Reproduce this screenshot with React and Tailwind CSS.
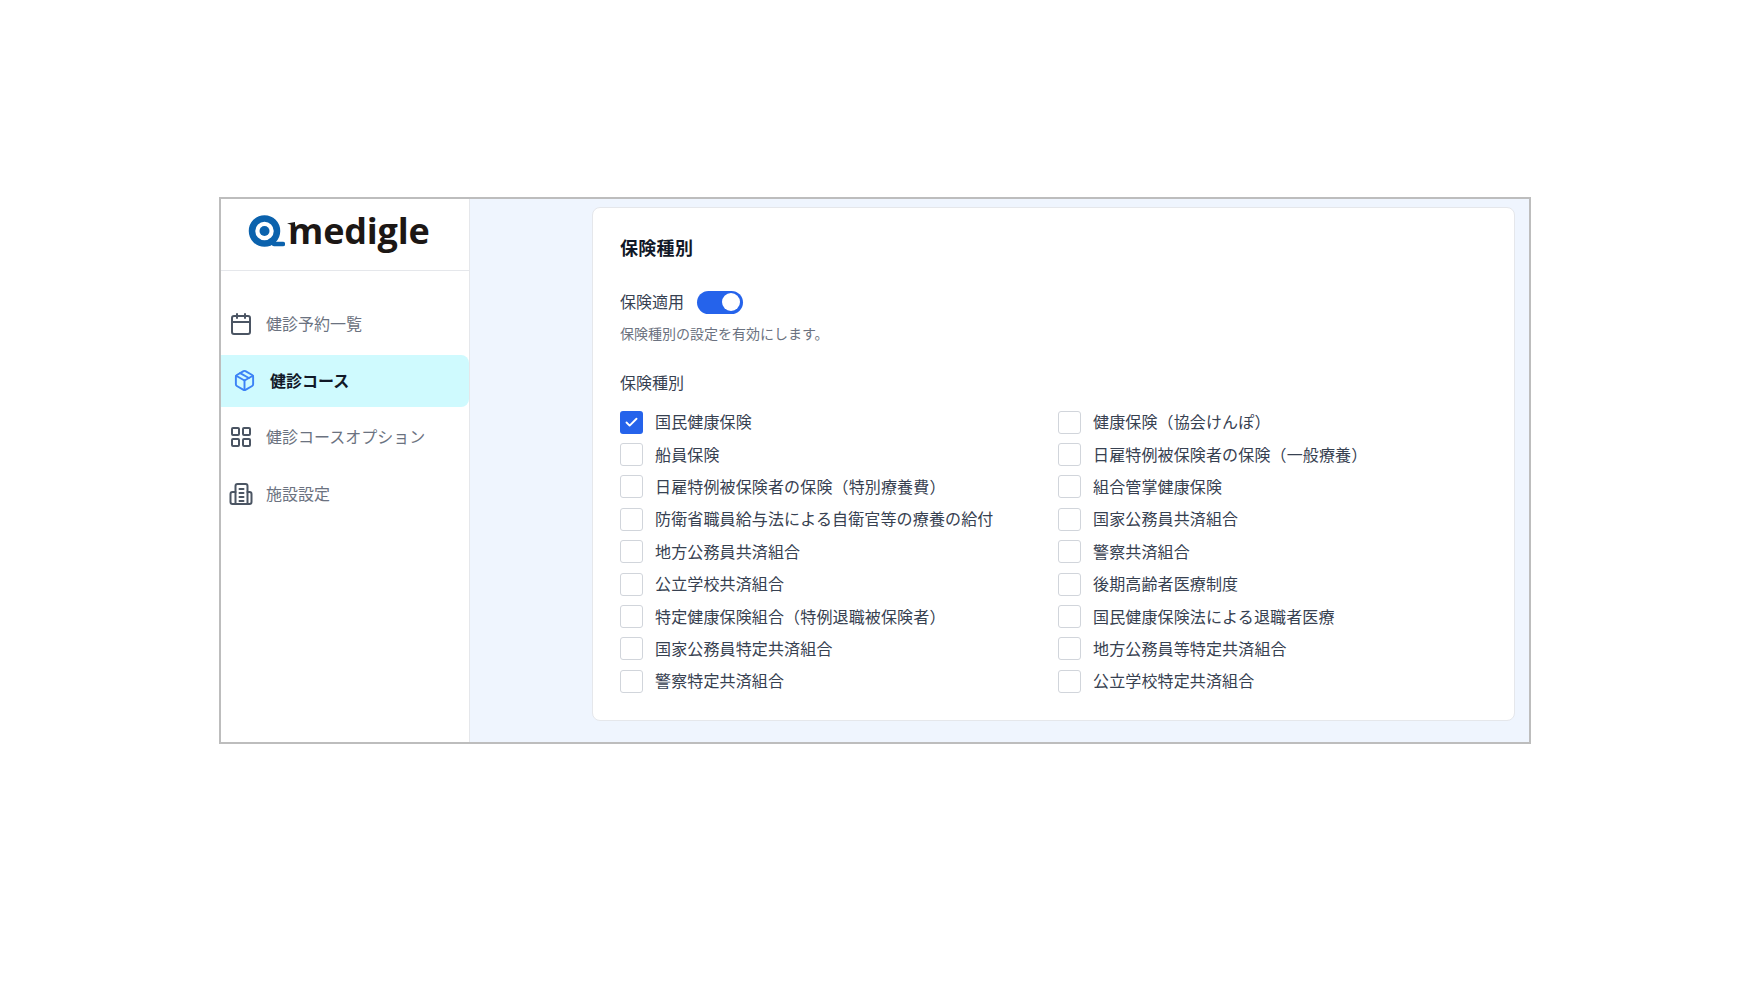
import { Calendar, Package, LayoutGrid, Check } from "lucide-react";

const FONT = "font-['Inter','Noto_Sans_CJK_JP',sans-serif]";

const NAV_ITEMS = [
    { label: "健診予約一覧", icon: Calendar },
    { label: "健診コース", icon: Package, active: true },
    { label: "健診コースオプション", icon: LayoutGrid },
    { label: "施設設定", icon: FacilityIcon },
];

const LEFT_ITEMS = [
    "国民健康保険",
    "船員保険",
    "日雇特例被保険者の保険（特別療養費）",
    "防衛省職員給与法による自衛官等の療養の給付",
    "地方公務員共済組合",
    "公立学校共済組合",
    "特定健康保険組合（特例退職被保険者）",
    "国家公務員特定共済組合",
    "警察特定共済組合",
];

const RIGHT_ITEMS = [
    "健康保険（協会けんぽ）",
    "日雇特例被保険者の保険（一般療養）",
    "組合管掌健康保険",
    "国家公務員共済組合",
    "警察共済組合",
    "後期高齢者医療制度",
    "国民健康保険法による退職者医療",
    "地方公務員等特定共済組合",
    "公立学校特定共済組合",
];

function FacilityIcon({ className }) {
    return (
        <svg className={className} viewBox="0 0 24 24" fill="none" stroke="currentColor" strokeWidth="2" strokeLinecap="round" strokeLinejoin="round">
            <path d="M6.500 22V4a2 2 0 0 1 2-2h8a2 2 0 0 1 2 2v18" />
            <path d="M6.500 10H3.500A2 2 0 0 0 1.500 12v8a2 2 0 0 0 2 2h17a2 2 0 0 0 2-2v-8a2 2 0 0 0-2-2h-2" />
            <path d="M10.500 7h4M10.500 11h4M10.500 15h4M10.500 19h4" />
        </svg>
    );
}

function Logo() {
    return (
        <div className="h-[72px] flex items-center gap-[3px] border-b border-[#e5e7eb] pl-[27px] pb-[7px]">
            <svg className="w-[37px] h-[33px]" viewBox="0 0 37 33" fill="none">
                <circle cx="16.500" cy="16" r="12.500" stroke="#0b62ad" strokeWidth="6.500" />
                <circle cx="16.500" cy="16" r="5" fill="#0b62ad" />
                <path d="M26 29h9" stroke="#0b62ad" strokeWidth="4.500" strokeLinecap="round" />
            </svg>
            <span className="relative text-[36px] leading-none font-bold tracking-[-0.2px] text-[#1c1715] font-['Open_Sans',sans-serif]">
                <svg className="absolute left-[-1px] top-[9px] w-[8px] h-[7px]" viewBox="0 0 8 7">
                    <path d="M0 1.500 8 0v7L5 3z" fill="#1c1715" />
                </svg>
                medigle
            </span>
        </div>
    );
}

function NavItem({ item }) {
    const Icon = item.icon;
    if (item.active) {
        return (
            <div className="h-[52px] flex items-center gap-[14px] pl-[12px] bg-[#cffafe] rounded-r-lg">
                <Icon className="w-[23px] h-[23px] text-[#3b82f6]" strokeWidth={2} />
                <span className="text-base font-bold text-[#111827]">{item.label}</span>
            </div>
        );
    }
    return (
        <div className="h-[52px] flex items-center gap-[13px] pl-[8px]">
            <Icon className="w-[24px] h-[24px] text-[#4b5563]" strokeWidth={2} />
            <span className="text-base text-[#6b7280]">{item.label}</span>
        </div>
    );
}

function CheckRow({ label, checked }) {
    return (
        <label className="h-[32.400px] flex items-center gap-[12px]">
            {checked ? (
                <span className="w-[23px] h-[23px] rounded-[3px] bg-[#2563eb] flex items-center justify-center">
                    <Check className="w-[15px] h-[15px] text-white" strokeWidth={3} />
                </span>
            ) : (
                <span className="w-[23px] h-[23px] rounded-[3px] bg-white border border-[#d1d5db]" />
            )}
            <span className="text-base tracking-[0.14px] text-[#374151] whitespace-nowrap">{label}</span>
        </label>
    );
}

export default function App() {
    return (
        <div className={`${FONT} w-full h-[984px] bg-white pt-[197px] pl-[219px]`}>
            <div className="w-[1312px] h-[547px] flex border-2 border-[#bdbdbd]">
                <aside className="w-[249px] bg-white border-r border-[#e5e7eb]">
                    <Logo />
                    <nav className="pt-[27px] flex flex-col gap-[4.500px]">
                        {NAV_ITEMS.map((item) => (
                            <NavItem key={item.label} item={item} />
                        ))}
                    </nav>
                </aside>
                <main className="flex-1 bg-[#eff5fe] pl-[122px] pr-[14px] pt-[8px]">
                    <section className="h-[514px] bg-white border border-[#e5e7eb] rounded-lg pl-[27px] pt-[27px]">
                        <h2 className="text-lg font-bold tracking-[0.3px] leading-[28px] text-[#111827]">保険種別</h2>
                        <div className="flex items-center gap-[13px] mt-[26px] h-[26px]">
                            <span className="text-base text-[#374151]">保険適用</span>
                            <span className="w-[46px] h-[23px] rounded-full bg-[#2563eb] flex items-center justify-end pr-[3px]">
                                <span className="w-[18px] h-[18px] rounded-full bg-white" />
                            </span>
                        </div>
                        <p className="text-sm leading-[20px] text-[#6b7280] mt-[9px]">保険種別の設定を有効にします。</p>
                        <p className="text-base leading-[24px] text-[#374151] mt-[27px]">保険種別</p>
                        <div className="flex mt-[11px]">
                            <div className="w-[438px]">
                                {LEFT_ITEMS.map((label, i) => (
                                    <CheckRow key={label} label={label} checked={i === 0} />
                                ))}
                            </div>
                            <div>
                                {RIGHT_ITEMS.map((label) => (
                                    <CheckRow key={label} label={label} />
                                ))}
                            </div>
                        </div>
                    </section>
                </main>
            </div>
        </div>
    );
}
